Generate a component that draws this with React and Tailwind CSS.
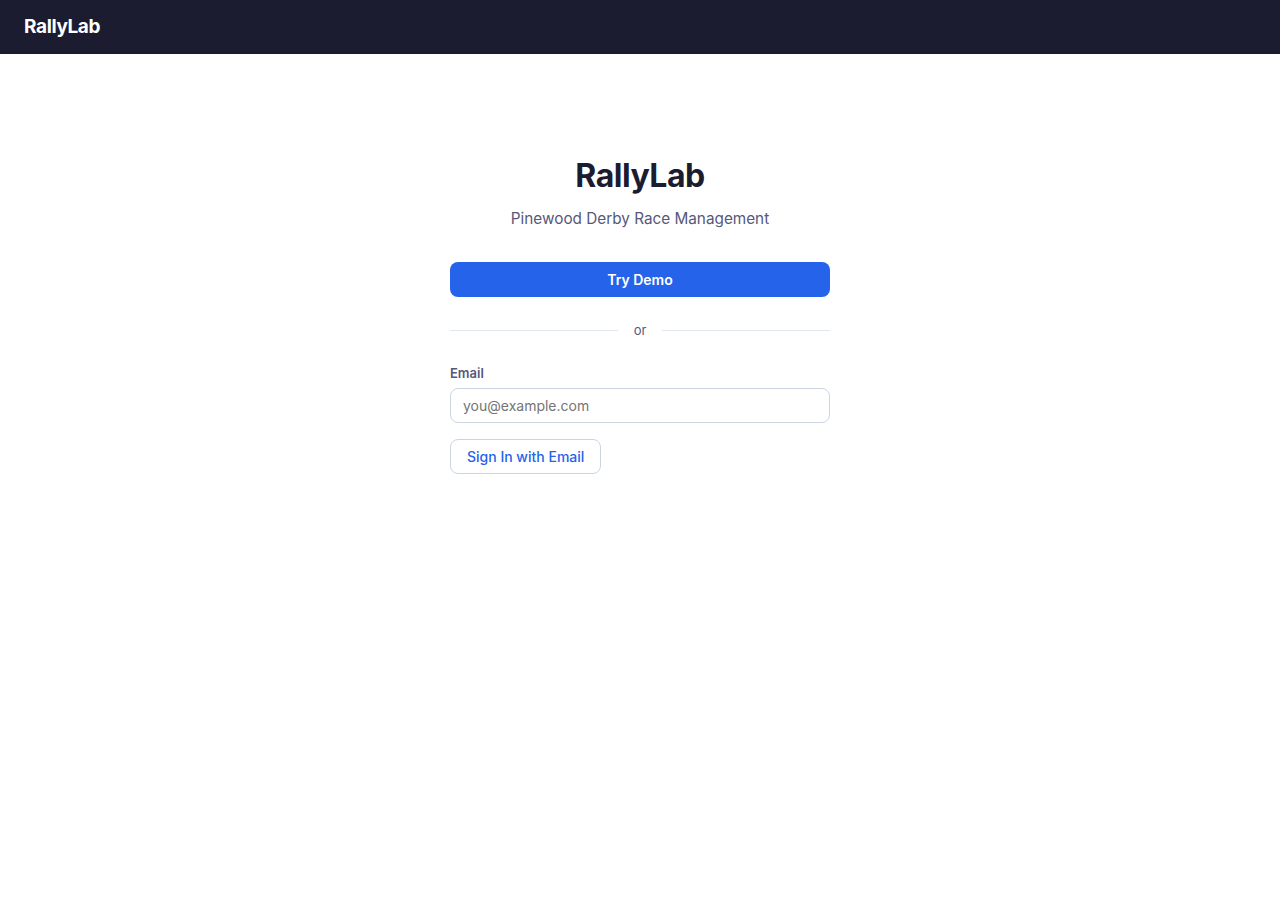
import React, { useState } from 'react';

const App = () => {
    const [email, setEmail] = useState('');

    return (
        <div className="min-h-screen bg-white font-['Inter',sans-serif]">
            <header className="h-[54px] bg-[#1b1c30] flex items-center px-6">
                <span className="text-white text-[19px] font-bold tracking-[-0.02em]">RallyLab</span>
            </header>

            <main className="flex justify-center pt-[102px]">
                <div className="w-[380px]">
                    <h1 className="text-center text-[32px] leading-[40px] font-bold text-[#1b1c30] tracking-[-0.015em]">RallyLab</h1>
                    <p className="text-center text-[15.3px] leading-6 text-[#56587a] mt-[11px]">Pinewood Derby Race Management</p>

                    <button className="mt-[31px] w-full h-[35px] rounded-lg bg-[#2563eb] text-white text-[14px] font-semibold">
                        Try Demo
                    </button>

                    <div className="flex items-center gap-4 mt-[24px]">
                        <div className="flex-1 h-px bg-[#e2e8f0]" />
                        <span className="text-[13px] text-[#56587a]">or</span>
                        <div className="flex-1 h-px bg-[#e2e8f0]" />
                    </div>

                    <label className="block mt-[23px] text-[13px] font-semibold text-[#56587a]">Email</label>
                    <input
                        type="email"
                        value={email}
                        onChange={(e) => setEmail(e.target.value)}
                        placeholder="you@example.com"
                        className="mt-[5px] w-full h-[35px] rounded-lg border border-[#cbd5e1] px-3 text-[14px] text-[#1b1c30] placeholder:text-[#757575] outline-none"
                    />

                    <button className="mt-4 h-[35px] px-4 rounded-lg border border-[#cbd5e1] bg-white text-[#2563eb] text-[14px] font-medium">
                        Sign In with Email
                    </button>
                </div>
            </main>
        </div>
    );
};

export default App;
